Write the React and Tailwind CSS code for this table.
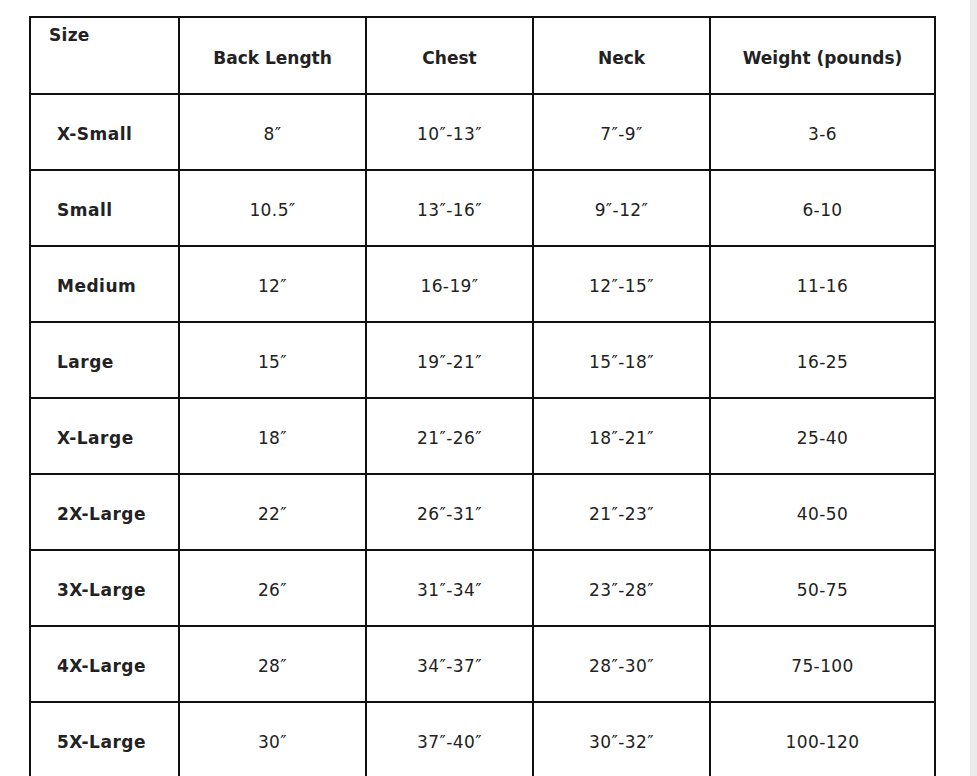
import React from 'react';

const HEADERS = ['Back Length', 'Chest', 'Neck', 'Weight (pounds)'];

const ROWS = [
  ['X-Small', '8″', '10″-13″', '7″-9″', '3-6'],
  ['Small', '10.5″', '13″-16″', '9″-12″', '6-10'],
  ['Medium', '12″', '16-19″', '12″-15″', '11-16'],
  ['Large', '15″', '19″-21″', '15″-18″', '16-25'],
  ['X-Large', '18″', '21″-26″', '18″-21″', '25-40'],
  ['2X-Large', '22″', '26″-31″', '21″-23″', '40-50'],
  ['3X-Large', '26″', '31″-34″', '23″-28″', '50-75'],
  ['4X-Large', '28″', '34″-37″', '28″-30″', '75-100'],
  ['5X-Large', '30″', '37″-40″', '30″-32″', '100-120'],
];

const cell = 'border-r-2 border-b-2 border-[#111] flex items-center justify-center pt-[4px]';

export default function App() {
  return (
    <div className="h-screen w-full overflow-hidden bg-white flex text-[17px] leading-[25px] text-[#222]" style={{ fontFamily: '"DejaVu Sans", Verdana, sans-serif' }}>
      <div className="flex-1 pt-[16px] pl-[29px]">
        <div className="grid grid-cols-[149px_187px_167px_177px_225px] grid-rows-[77px] auto-rows-[76px] w-max border-l-2 border-t-2 border-[#111]">
          <div className="border-r-2 border-b-2 border-[#111] pt-[5px] pl-[18px] font-bold tracking-[0.3px]">Size</div>
          {HEADERS.map((h) => (
            <div key={h} className={`${cell} font-bold pt-[5px]`}>{h}</div>
          ))}
          {ROWS.map((r) => (
            <React.Fragment key={r[0]}>
              <div className="border-r-2 border-b-2 border-[#111] flex items-center pt-[4px] pl-[26px] font-bold tracking-[0.5px]">{r[0]}</div>
              {r.slice(1).map((v, i) => (
                <div key={i} className={`${cell} tracking-[0.4px]`}>{v}</div>
              ))}
            </React.Fragment>
          ))}
        </div>
      </div>
      <div className="w-[7px] bg-[#ebebeb]" />
    </div>
  );
}
